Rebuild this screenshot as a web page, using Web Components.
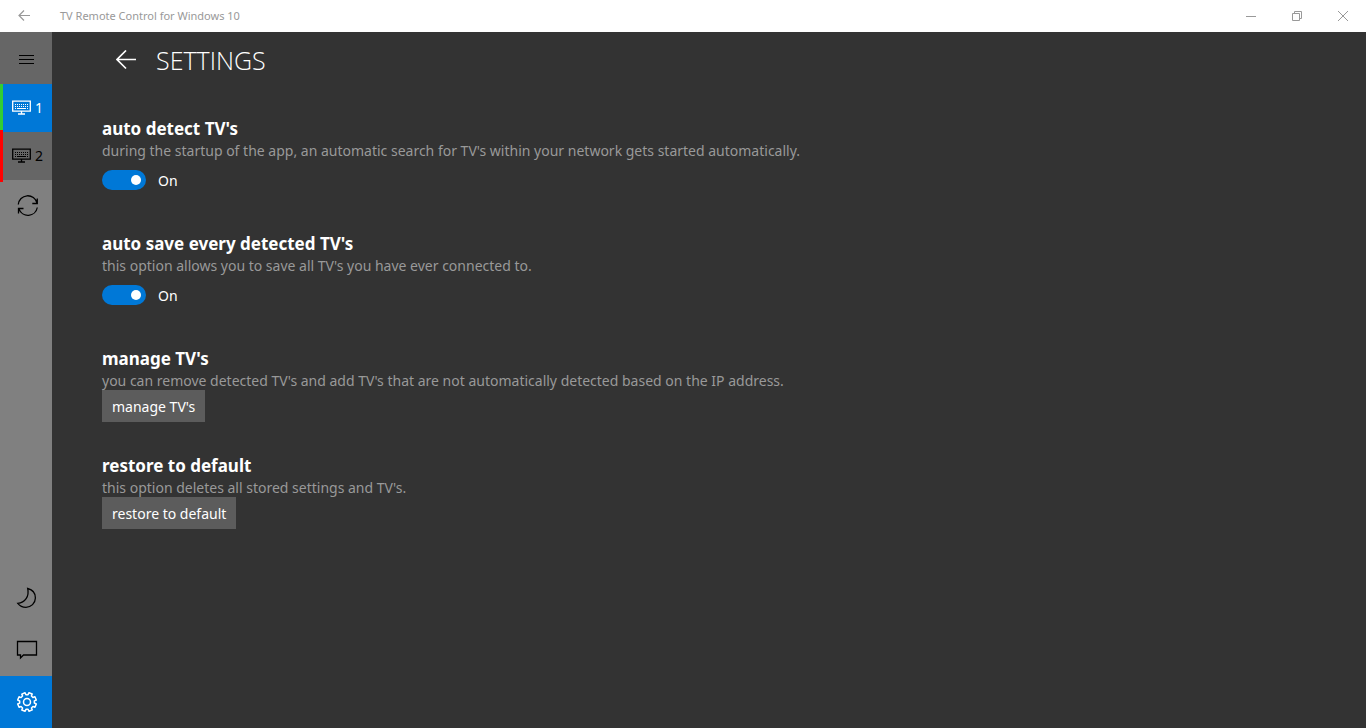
<!DOCTYPE html>
<html lang="en">
<head>
<meta charset="utf-8">
<title>TV Remote Control for Windows 10</title>
<style>
html, body { margin: 0; height: 100%; }
body { background: #333; color: #fff; font-family: "Noto Sans", "Open Sans", sans-serif; font-size: 14px; }
</style>
</head>
<body>
<tv-app></tv-app>
<script>
const define = (name, html, setup) => {
  const template = document.createElement('template');
  template.innerHTML = html;
  customElements.define(name, class extends HTMLElement {
    constructor() {
      super();
      this.attachShadow({ mode: 'open' }).append(template.content.cloneNode(true));
    }
    connectedCallback() { if (setup) setup(this, this.shadowRoot); }
  });
};

const gear = (() => {
  const points = [];
  const teeth = 8;
  for (let i = 0; i < teeth; i++) {
    const a = i * Math.PI * 2 / teeth - Math.PI / 2;
    for (const [offset, r] of [[-0.25, 7.4], [-0.19, 9.5], [0.19, 9.5], [0.25, 7.4]]) {
      points.push((11 + r * Math.cos(a + offset + 0.39)).toFixed(2) + ' ' + (11 + r * Math.sin(a + offset + 0.39)).toFixed(2));
    }
  }
  return 'M' + points.join('L') + 'Z';
})();

const svg = (w, h, body) => `<svg width="${w}" height="${h}" viewBox="0 0 ${w} ${h}" fill="none" stroke="currentColor" aria-hidden="true">${body}</svg>`;
const icons = {
  back: svg(12, 12, '<path d="M12 5.5H1M6 .5L1 5.500l5 5" stroke-width="1.200"/>'),
  bigback: svg(20, 20, '<path stroke-width="1.700" d="M20 9.500H1M10 .5L1 9.500l9 9"/>'),
  minimize: svg(10, 10, '<path d="M0 5.5h10"/>'),
  restore: svg(10, 10, '<path d="M.5 2.5h7v7h-7zM2.5 2.500v-2h7v7h-2"/>'),
  close: svg(10, 10, '<path d="M0 0l10 10M10 0L0 10"/>'),
  menu: svg(16, 12, '<path d="M0 2.500h15M0 6.500h15M0 10.500h15"/>'),
  tv: svg(20, 16, '<path d="M.7 1.200h17.600v10H.7zM9.500 11.500v2.500M6 14h7" stroke-width="1.300"/><path d="M3 4.500h1M5 4.500h1M7 4.500h1M9 4.500h1M11 4.500h1M13 4.500h1M15 4.500h1M3 6.500h1M5 6.500h1M7 6.500h1M9 6.500h1M11 6.500h1M13 6.500h1M15 6.500h1M3 8.500h1M5 8.500h9M15 8.500h1"/>'),
  refresh: svg(22, 22, '<path stroke-width="1.300" d="M2.300 9.500A9.500 9.500 0 0 1 21 8M21.300 3.500V8.500h-5M21.300 12.500A9.500 9.500 0 0 1 3 14M2.500 18.500v-5h5"/>'),
  moon: svg(22, 22, '<path stroke-width="1.300" d="M11.700 1.500C16.500 2.700 19.500 6.500 19.400 11C19.300 16.300 15 20.300 10 20.300C6.500 20.300 3.600 18.700 1.800 16.300C9 15.800 13.500 9.500 11.700 1.500Z"/>'),
  chat: svg(22, 22, '<path stroke-width="1.300" d="M1.500 2.500h19v13.500H7.500L4.500 19v-3h-3z"/>'),
  gear: svg(22, 22, `<path stroke-width="1.500" stroke-linejoin="round" d="${gear}"/><circle cx="11" cy="11" r="3.500" stroke-width="1.500"/>`)
};

define('ui-icon', '<style>:host{display:block} svg{display:block}</style><span></span>', (el, root) => {
  root.querySelector('span').innerHTML = icons[el.getAttribute('name')];
});

define('title-bar', `
<style>
:host { display: flex; align-items: center; height: 32px; flex: none; background: #fff; color: #999; font-size: 11px; line-height: 16px; }
button { display: grid; place-items: center; height: 32px; border: 0; padding: 0; background: none; color: inherit; }
.back { width: 48px; }
.text { flex: 1; padding-left: 12px; }
.control { width: 46px; }
</style>
<button class="back" aria-label="Back"><ui-icon name="back"></ui-icon></button>
<span class="text"><slot></slot></span>
<button class="control" aria-label="Minimize"><ui-icon name="minimize"></ui-icon></button>
<button class="control" aria-label="Restore"><ui-icon name="restore"></ui-icon></button>
<button class="control" aria-label="Close"><ui-icon name="close"></ui-icon></button>`);

define('nav-item', `
<style>
:host { display: block; position: relative; height: 52px; color: #000; }
:host([device]) { height: 48px; }
:host([shade]) { background: #666; }
:host([active]) { background: #0078d7; color: #fff; }
:host([status])::before { content: ""; position: absolute; left: 0; top: 0; width: 3px; height: 48px; background: #32cd32; }
:host([status="offline"])::before { top: -2px; height: 52px; background: #f00; }
button { display: flex; align-items: center; justify-content: center; gap: 3px; box-sizing: border-box; width: 100%; height: 100%; padding: 2px 0 0 2px; border: 0; background: none; color: inherit; font: inherit; line-height: 20px; }
:host([device]) button { justify-content: flex-start; padding: 0 0 0 12px; }
:host(:not([shade])) button { padding-top: 0; }
</style>
<button><ui-icon></ui-icon><slot></slot></button>`, (el, root) => {
  const label = el.getAttribute('label');
  root.querySelector('button').setAttribute('aria-label', label);
  const icon = document.createElement('ui-icon');
  icon.setAttribute('name', el.getAttribute('icon'));
  root.querySelector('ui-icon').replaceWith(icon);
});
define('side-nav', `
<style>
:host { display: flex; flex-direction: column; width: 52px; flex: none; background: #808080; }
.space { flex: 1; }
</style>
<nav-item icon="menu" label="Menu" shade></nav-item>
<nav-item icon="tv" label="TV 1" device active status="online">1</nav-item>
<nav-item icon="tv" label="TV 2" device shade status="offline">2</nav-item>
<nav-item icon="refresh" label="Refresh"></nav-item>
<div class="space"></div>
<nav-item icon="moon" label="Dark theme"></nav-item>
<nav-item icon="chat" label="Feedback"></nav-item>
<nav-item icon="gear" label="Settings" active></nav-item>`);

define('page-header', `
<style>
:host { display: flex; align-items: center; gap: 20px; height: 56px; padding-left: 64px; }
button { padding: 0; border: 0; background: none; color: #fff; }
h1 { margin: 0; font-family: "Open Sans", "Noto Sans", sans-serif; font-size: 25px; font-weight: 300; line-height: 36px; }
</style>
<button aria-label="Go back"><ui-icon name="bigback"></ui-icon></button>
<h1><slot></slot></h1>`);

define('setting-group', `
<style>
:host { display: block; }
h2 { margin: 0; font-size: 17px; font-weight: 700; line-height: 26px; }
p { margin: 0; color: #999; line-height: 18px; }
</style>
<h2></h2><p></p><slot></slot>`, (el, root) => {
  root.querySelector('h2').textContent = el.getAttribute('heading');
  root.querySelector('p').textContent = el.getAttribute('description');
});

define('toggle-switch', `
<style>
:host { display: flex; height: 40px; align-items: center; }
label { display: flex; align-items: center; gap: 12px; line-height: 20px; }
span { padding-top: 2px; }
input { appearance: none; display: flex; align-items: center; justify-content: flex-end; box-sizing: border-box; width: 44px; height: 20px; margin: 0; padding: 5px; border-radius: 10px; background: #0078d7; }
input::before { content: ""; width: 10px; height: 10px; border-radius: 50%; background: #fff; }
input:not(:checked) { justify-content: flex-start; background: #666; }
</style>
<label><input type="checkbox" role="switch" checked><span>On</span></label>`, (el, root) => {
  root.querySelector('input').onchange = e => { root.querySelector('span').textContent = e.target.checked ? 'On' : 'Off'; };
});

define('flat-button', `
<style>
:host { display: flex; }
button { height: 32px; padding: 2px 10px 0; border: 0; background: #5c5c5c; color: #fff; font: inherit; line-height: 20px; }
</style>
<button><slot></slot></button>`);

define('settings-page', `
<style>
:host { display: block; flex: 1; min-width: 0; background: #333; }
main { display: flex; flex-direction: column; gap: 31px; padding: 28px 50px; }
</style>
<page-header>SETTINGS</page-header>
<main>
<setting-group heading="auto detect TV's" description="during the startup of the app, an automatic search for TV's within your network gets started automatically."><toggle-switch></toggle-switch></setting-group>
<setting-group heading="auto save every detected TV's" description="this option allows you to save all TV's you have ever connected to."><toggle-switch></toggle-switch></setting-group>
<setting-group heading="manage TV's" description="you can remove detected TV's and add TV's that are not automatically detected based on the IP address."><flat-button>manage TV's</flat-button></setting-group>
<setting-group heading="restore to default" description="this option deletes all stored settings and TV's."><flat-button>restore to default</flat-button></setting-group>
</main>`);

define('tv-app', `
<style>
:host { display: flex; flex-direction: column; min-height: 100vh; }
.body { display: flex; flex: 1; }
</style>
<title-bar>TV Remote Control for Windows 10</title-bar>
<div class="body"><side-nav></side-nav><settings-page></settings-page></div>`);
</script>
</body>
</html>
